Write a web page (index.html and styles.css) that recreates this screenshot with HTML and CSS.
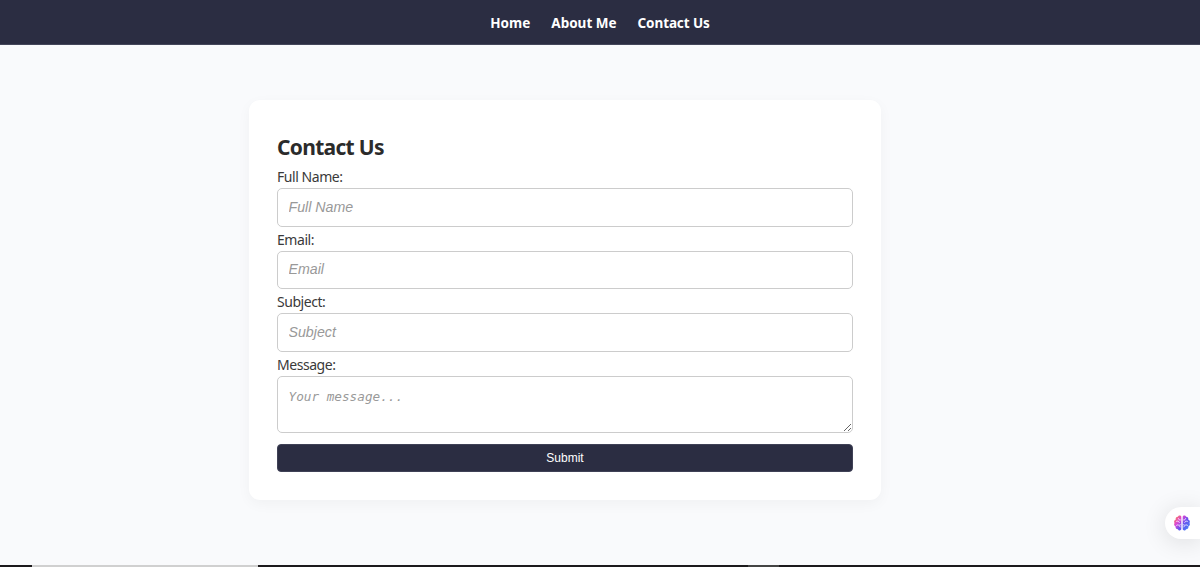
FILE: index.html
```html
<!DOCTYPE html>
<html lang="en">
<head>
    <meta charset="UTF-8">
    <meta name="viewport" content="width=device-width, initial-scale=1.0">
    <title>Contact Us</title>
    <link rel="stylesheet" href="styles.css">
</head>
<body>
    <nav class="navbar">
        <a href="#" class="nav-home">Home</a>
        <a href="#" class="nav-about">About Me</a>
        <a href="#" class="nav-contact">Contact Us</a>
    </nav>

    <main class="contact-container">
        <h2>Contact Us</h2>
        <form class="contact-form">
            <label for="name">Full Name:</label>
            <input type="text" id="name" placeholder="Full Name">

            <label for="email">Email:</label>
            <input type="email" id="email" placeholder="Email">

            <label for="subject">Subject:</label>
            <input type="text" id="subject" placeholder="Subject">

            <label for="message">Message:</label>
            <textarea id="message" placeholder="Your message..."></textarea>

            <button type="submit">Submit</button>
        </form>
    </main>

    <div class="assistant-tab">
        <svg width="18" height="18" viewBox="0 0 18 18" fill="none">
            <defs>
                <linearGradient id="brain" x1="2" y1="3" x2="16" y2="15" gradientUnits="userSpaceOnUse">
                    <stop offset="0" stop-color="#ff7a59"/>
                    <stop offset="0.3" stop-color="#d946d8"/>
                    <stop offset="0.6" stop-color="#6552ee"/>
                    <stop offset="1" stop-color="#4a86f5"/>
                </linearGradient>
            </defs>
            <path fill="url(#brain)" d="M8.300 2.600C8 1.200 5.500 1 4.900 2.700 3.200 2.600 2.200 4.200 2.800 5.600 1 6.200.7 8 1.500 9 .7 10.200 1.100 11.900 2.600 12.400 2.300 14.200 3.500 15.300 4.900 15.200 5.500 16.900 8 16.800 8.300 15.300ZM9.700 2.600C10 1.200 12.500 1 13.100 2.700 14.800 2.600 15.800 4.200 15.200 5.600 17 6.200 17.300 8 16.500 9 17.300 10.200 16.900 11.900 15.400 12.400 15.700 14.200 14.500 15.300 13.100 15.200 12.500 16.900 10 16.800 9.700 15.300Z"/>
            <path stroke="#fff" stroke-width="0.8" stroke-linecap="round" d="M3.600 7.300c1.400-.5 2.300 0 2.700 1.100M5.400 4.600c.2 1 .9 1.500 1.900 1.400M3.500 11.300c.8-.7 1.900-.6 2.500.2M7.300 10.300c-.8.7-.8 1.700-.2 2.600M14.400 7.300c-1.400-.5-2.300 0-2.700 1.100M12.600 4.600c-.2 1-.9 1.500-1.900 1.400M14.500 11.300c-.8-.7-1.900-.6-2.500.2M10.700 10.300c.8.7.8 1.700.2 2.600"/>
        </svg>
    </div>

    <div class="taskbar">
        <span class="taskbar-search"></span>
        <span class="taskbar-app"></span>
    </div>
</body>
</html>
```

FILE: styles.css
```css
* {
    box-sizing: border-box;
}
body {
    margin: 0;
    height: 567px;
    overflow: hidden;
    font-family: "Noto Sans", "Open Sans", sans-serif;
    background-color: #f9fafc;
    color: #2b2b2b;
    display: flex;
    flex-direction: column;
}
.navbar {
    height: 45px;
    padding-top: 1px;
    background-color: #2b2d42;
    border-bottom: 1px solid #44465a;
    display: flex;
    justify-content: center;
    align-items: center;
    gap: 21px;
}
.navbar a {
    color: #fff;
    font-size: 13.5px;
    font-weight: bold;
    line-height: 20px;
    text-decoration: none;
    white-space: nowrap;
}
.navbar .nav-contact {
    letter-spacing: -0.1px;
}
.contact-container {
    width: 632px;
    height: 400px;
    margin: 55px 0 0 249px;
    padding: 32px 28px 28px;
    background-color: #fff;
    border-radius: 11px;
    box-shadow: 0 4px 14px rgba(0, 0, 0, 0.04);
}
.contact-container h2 {
    margin: 0;
    font-size: 21px;
    line-height: 31px;
    letter-spacing: -0.7px;
}
.contact-form {
    display: flex;
    flex-direction: column;
}
.contact-form label {
    height: 24px;
    padding-top: 3px;
    font-size: 14px;
    line-height: 20px;
    letter-spacing: -0.45px;
    color: #3a3a3a;
}
.contact-form label[for="name"] {
    height: 25px;
    padding-top: 4px;
}
.contact-form input,
.contact-form textarea {
    margin: 0;
    border: 1px solid #ccc;
    border-radius: 5px;
    padding: 0 10.5px;
    background-color: #fff;
}
.contact-form input {
    height: 38.5px;
    padding-bottom: 1px;
    font-family: "Liberation Sans", Arial, sans-serif;
    font-size: 14.2px;
}
.contact-form textarea {
    height: 57px;
    padding-top: 12px;
    font-family: "DejaVu Sans Mono", monospace;
    font-size: 12.7px;
    resize: vertical;
}
.contact-form ::placeholder {
    color: #999;
    font-style: italic;
}
.contact-form button {
    height: 28px;
    margin-top: 11px;
    padding: 0;
    border: 1px solid #3f4156;
    border-radius: 4px;
    background-color: #2b2d42;
    color: #fff;
    font-family: "Liberation Sans", Arial, sans-serif;
    font-size: 12px;
}
/* Floating tab on the right edge */
.assistant-tab {
    position: absolute;
    right: 0;
    top: 507px;
    width: 35px;
    height: 32px;
    padding: 7px 0 0 8px;
    background-color: #fff;
    border-radius: 16px 0 0 16px;
    box-shadow: 0 3px 24px rgba(0, 0, 0, 0.12);
}
.assistant-tab svg {
    display: block;
}
.taskbar {
    height: 2px;
    margin-top: auto;
    background-color: #1c1a1c;
    display: flex;
}
.taskbar-search {
    width: 226px;
    margin-left: 32px;
    background-color: #d0d0d0;
}
.taskbar-app {
    width: 31px;
    margin-left: 490px;
    background-color: #444;
}
```
